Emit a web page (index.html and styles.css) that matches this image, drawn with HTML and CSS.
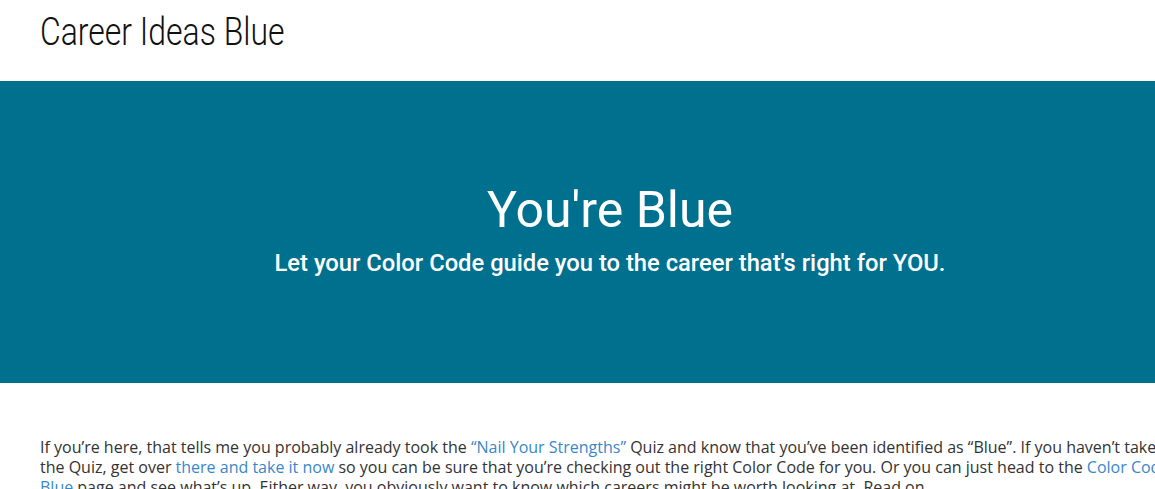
FILE: index.html
```html
<!DOCTYPE html>
<html lang="en">
<head>
  <meta charset="UTF-8">
  <meta name="viewport" content="width=device-width, initial-scale=1.0">
  <title>Career Ideas Blue</title>
  <link rel="stylesheet" href="styles.css">
</head>
<body>
  <div class="page">
    <header class="site-header">
      <h1>Career Ideas Blue</h1>
    </header>

    <section class="hero">
      <h2>You're Blue</h2>
      <p>Let your Color Code guide you to the career that's right for YOU.</p>
    </section>

    <main class="content">
      <p>
        If you’re here, that tells me you probably already took the
        <a href="#">“Nail Your Strengths”</a> Quiz and know that you’ve been identified as “Blue”.
        If you haven’t taken the Quiz, get over <a href="#">there and take it now</a> so you can be
        sure that you’re checking out the right Color Code for you. Or you can just head to the
        <a href="#">Color Code Blue</a> page and see what’s up. Either way, you obviously want to know
        which careers might be worth looking at. Read on.
      </p>
    </main>
  </div>
</body>
</html>
```

FILE: styles.css
```css
* {
  box-sizing: border-box;
  margin: 0;
  padding: 0;
}
html, body {
  overflow: hidden;
}
body {
  font-family: 'Open Sans', sans-serif;
  background: #fff;
  color: #333;
}
.page {
  width: 1220px;
}
.site-header {
  height: 81px;
  padding: 10px 40px 0;
}
/* no condensed Roboto installed, so squeeze the light face */
.site-header h1 {
  display: inline-block;
  font-family: 'Roboto', sans-serif;
  font-weight: 300;
  font-size: 38px;
  line-height: 44px;
  color: #111;
  transform: scaleX(0.84);
  transform-origin: left center;
}
.hero {
  background: #00708f;
  color: #fff;
  height: 302px;
  padding-bottom: 6px;
  display: flex;
  flex-direction: column;
  align-items: center;
  justify-content: center;
  text-align: center;
  font-family: 'Roboto', sans-serif;
}
.hero h2 {
  font-weight: 400;
  font-size: 50px;
  line-height: 60px;
  margin-bottom: 8px;
}
.hero p {
  font-weight: 500;
  font-size: 23.75px;
  line-height: 30px;
}
.content {
  padding: 54px 40px 0;
}
.content p {
  font-size: 16px;
  line-height: 20px;
}
.content a {
  color: #3a87c8;
  text-decoration: none;
}
```
